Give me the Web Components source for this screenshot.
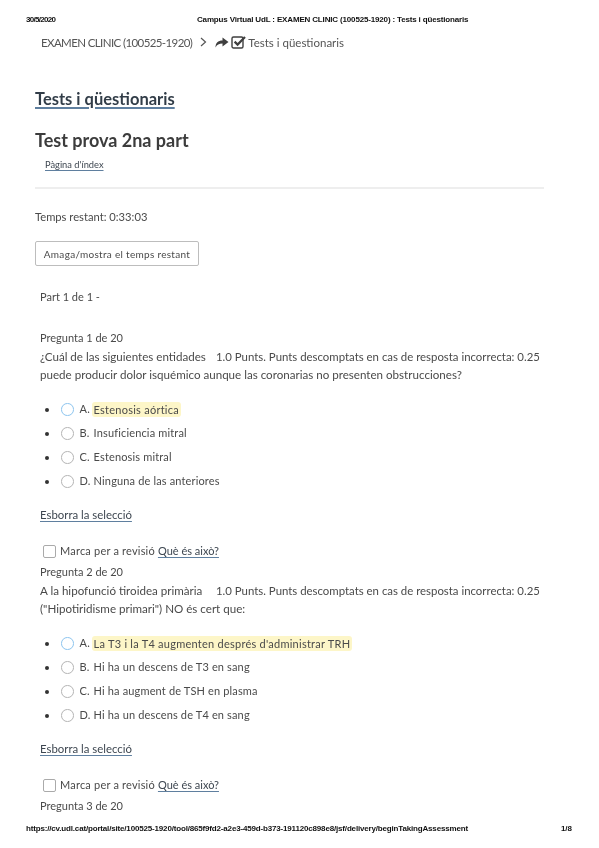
<!DOCTYPE html>
<html lang="ca"><head><meta charset="utf-8"><title>Tests i qüestionaris</title>
<style>
html,body{margin:0;padding:0;background:#fff}
body{width:599px;height:848px;overflow:hidden;font-family:Lato,"Noto Sans",sans-serif;color:#4a4a4a}
</style></head><body>
<print-sheet>
  <print-bar slot="top" left="30/5/2020" ls="-.7" mid="Campus Virtual UdL : EXAMEN CLINIC (100525-1920) : Tests i qüestionaris"></print-bar>
  <crumb-bar course="EXAMEN CLINIC (100525-1920)" page="Tests i qüestionaris"></crumb-bar>
  <page-head></page-head>
  <timer-box></timer-box>
  <part-label>Part 1 de 1 -</part-label>
  <quiz-question num="Pregunta 1 de 20" top="0">
    <span slot="q">¿Cuál de las siguientes entidades</span>
    <span slot="rest">puede producir dolor isquémico aunque las coronarias no presenten obstrucciones?</span>
    <quiz-option letter="A" hl>Estenosis aórtica</quiz-option>
    <quiz-option letter="B">Insuficiencia mitral</quiz-option>
    <quiz-option letter="C">Estenosis mitral</quiz-option>
    <quiz-option letter="D">Ninguna de las anteriores</quiz-option>
  </quiz-question>
  <quiz-question num="Pregunta 2 de 20">
    <span slot="q">A la hipofunció tiroidea primària</span>
    <span slot="rest">("Hipotiridisme primari") NO és cert que:</span>
    <quiz-option letter="A" hl>La T3 i la T4 augmenten després d'administrar TRH</quiz-option>
    <quiz-option letter="B">Hi ha un descens de T3 en sang</quiz-option>
    <quiz-option letter="C">Hi ha augment de TSH en plasma</quiz-option>
    <quiz-option letter="D">Hi ha un descens de T4 en sang</quiz-option>
  </quiz-question>
  <part-label class="last">Pregunta 3 de 20</part-label>
  <print-bar slot="bottom" ls="-.17" left="https://cv.udl.cat/portal/site/100525-1920/tool/865f9fd2-a2e3-459d-b373-191120c898e8/jsf/delivery/beginTakingAssessment" right="1/8"></print-bar>
</print-sheet>
<script>
const def=(n,html)=>customElements.define(n,class extends HTMLElement{
  connectedCallback(){ if(this.shadowRoot)return;
    const s=this.attachShadow({mode:'open'});
    s.innerHTML=typeof html==='function'?html(this):html; }
});
const link='color:#3d4650;text-decoration:underline;text-decoration-color:#5f7f9f;text-underline-offset:2px;text-decoration-thickness:1px';

def('print-sheet',`<style>
:host{display:flex;flex-direction:column;width:599px;height:848px;box-sizing:border-box;padding-top:15px;overflow:hidden;filter:blur(.35px)}
main{flex:1;min-height:0;overflow:hidden;padding:0 55px 0 35px}
</style><slot name="top"></slot><main><slot></slot></main><slot name="bottom"></slot><div style="height:14px"></div>`);

def('print-bar',h=>`<style>
:host{display:flex;height:10px;font:600 8px/10px "Liberation Sans",sans-serif;color:#111;padding-left:26px;padding-right:27px;position:relative}
.l{white-space:nowrap;flex:0 0 auto;letter-spacing:${h.getAttribute('ls')||0}px}
.m{position:absolute;left:197px;white-space:nowrap;letter-spacing:-.16px}
.r{margin-left:auto}
</style><span class="l">${h.getAttribute('left')}</span>${h.getAttribute('mid')?`<span class="m">${h.getAttribute('mid')}</span>`:''}${h.getAttribute('right')?`<span class="r">${h.getAttribute('right')}</span>`:''}`);

def('crumb-bar',h=>`<style>
:host{display:flex;align-items:center;height:18px;margin-top:8px;padding-left:6px;font-size:11.5px;color:#555;white-space:nowrap}
svg{display:block}
.c{letter-spacing:-.6px}
</style><span class="c">${h.getAttribute('course')}</span>
<svg width="8" height="10" viewBox="0 0 8 10" style="margin:0 8px 0 7px"><path d="M2 1l4.5 4L2 9" fill="none" stroke="#555" stroke-width="1.2"/></svg>
<svg width="14" height="11" viewBox="0 0 14 11" style="margin-right:2px"><path d="M.5 10.5C.5 6 3 3.5 7.5 3.5V.5l6 4.5-6 4.5v-3C4 6.5 2 7.5.5 10.5z" fill="#3f3f3f"/></svg>
<svg width="15" height="14" viewBox="0 0 15 14" style="margin-right:2px"><rect x="1" y="2" width="11" height="11" rx="1.5" fill="none" stroke="#3f3f3f" stroke-width="1.4"/><path d="M3.6 6.6l3 3L14 2" fill="none" stroke="#3f3f3f" stroke-width="2.2"/></svg>
<span>${h.getAttribute('page')}</span>`);

def('page-head',`<style>
:host{display:block}
h1{margin:0;padding-top:38px;font-size:16.5px;line-height:20px;font-weight:700;color:#323d48}
h1 span{text-decoration:underline;text-decoration-color:#5f7f9f;text-decoration-thickness:1.5px;text-underline-offset:2px}
h2{margin:0;padding-top:20px;font-size:18px;line-height:22px;font-weight:700;color:#3c3c3c}
a{display:block;margin:4px 0 0 10px;font-size:9.3px;line-height:20px;${link}}
hr{border:0;border-top:2px solid #eee;margin:12px 0 0}
</style><h1><span>Tests i qüestionaris</span></h1><h2>Test prova 2na part</h2><a>Pàgina d'índex</a><hr>`);

def('timer-box',`<style>
:host{display:block;padding-top:19px;font-size:11.2px;line-height:18px;color:#4a4a4a}
button{display:block;margin-top:15px;width:164px;height:25px;padding:0;box-sizing:border-box;border:1px solid #bdbdbd;border-radius:2px;background:#fff;font:10px Lato,sans-serif;letter-spacing:.3px;color:#4a4a4a}
</style><div>Temps restant: 0:33:03</div><button>Amaga/mostra el temps restant</button>`);

def('part-label',`<style>
:host{display:block;margin:22px 0 0 5px;font-size:11px;line-height:18px;color:#4a4a4a}
:host(.last){margin-top:3px}
</style><slot></slot>`);

def('quiz-question',h=>`<style>
:host{display:block;margin:${h.hasAttribute('top')?'23px':'3px'} 0 0 5px;font-size:11px;line-height:18.5px;color:#4a4a4a}
.t{white-space:nowrap;font-size:11.6px}
.q{display:inline-block;width:176px}
.pts{font-size:11.4px}
ul{list-style:none;margin:13px 0 0;padding:0}
.clear{display:block;margin-top:12px;font-size:11.4px;line-height:18px;${link}}
.mark{display:flex;align-items:center;margin-top:18.5px;height:18px;letter-spacing:.2px}
.box{width:11px;height:11px;border:1px solid #aaa;border-radius:2px;margin:0 4px 0 3px}
.mark a{${link};letter-spacing:0}
</style><div>${h.getAttribute('num')}</div>
<div class="t"><span class="q"><slot name="q"></slot></span><span class="pts">1.0 Punts. Punts descomptats en cas de resposta incorrecta: 0.25</span><br><slot name="rest"></slot></div>
<ul><slot></slot></ul>
<a class="clear">Esborra la selecció</a>
<div class="mark"><span class="box"></span><span>Marca per a revisió&nbsp;</span><a>Què és això?</a></div>`);

def('quiz-option',h=>`<style>
:host{display:flex;align-items:center;height:24px;letter-spacing:.15px;white-space:nowrap;color:#4a4a4a}
.dot{width:4px;height:4px;border-radius:50%;background:#333;margin:0 12px 0 5px}
.r{width:10.6px;height:10.6px;border-radius:50%;border:1.2px solid #b4b4b4;margin-right:6px;flex:none}
.r.on{border-color:#8cc4ee}
.lt{display:inline-block;width:14px}
.hl{background:#fdf6c8;border-radius:3px;padding:0 2px;margin-left:-2px;line-height:15px;letter-spacing:.25px}
</style><span class="dot"></span><span class="r ${h.hasAttribute('hl')?'on':''}"></span><span class="lt">${h.getAttribute('letter')}.</span><span class="${h.hasAttribute('hl')?'hl':''}"><slot></slot></span>`);
</script>
</body></html>
